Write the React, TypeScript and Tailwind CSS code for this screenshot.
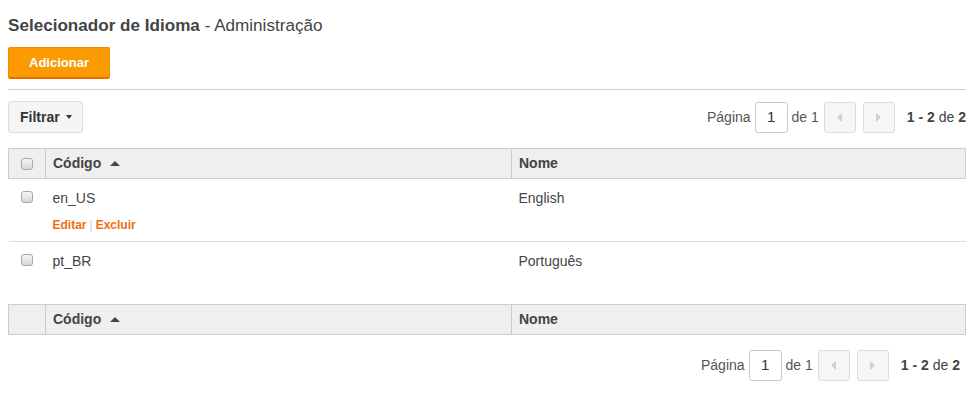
import React from 'react'

const font = { fontFamily: '"Liberation Sans", Arial, sans-serif' }

function Checkbox() {
  return (
    <span className="block mx-auto w-[12px] h-[12px] rounded-[3px] border border-[#a9a9a9] bg-gradient-to-b from-[#f4f4f4] to-[#d8d8d8]" />
  )
}

function SortCaret() {
  return (
    <svg width="10" height="6" viewBox="0 0 10 6" className="inline-block ml-[9px] mb-[2px]">
      <path d="M0 6 L5 1 L10 6 Z" fill="#444" />
    </svg>
  )
}

function Pager({ className = '' }: { className?: string }) {
  return (
    <div className={`flex items-center text-[14px] text-[#555] ${className}`}>
      <span>Página</span>
      <div className="ml-[4px] w-[33px] h-[31px] border border-[#c8c8c8] rounded-[3px] flex items-center justify-center text-[#333] text-[15px]">
        1
      </div>
      <span className="ml-[4px]">de 1</span>
      <button className="ml-[5px] w-[32px] h-[31px] border border-[#ddd] rounded-[3px] bg-[#f6f6f6] flex items-center justify-center">
        <svg width="5" height="9" viewBox="0 0 5 9">
          <path d="M5 0 L0 4.5 L5 9 Z" fill="#cfcfcf" />
        </svg>
      </button>
      <button className="ml-[7px] w-[32px] h-[31px] border border-[#ddd] rounded-[3px] bg-[#f6f6f6] flex items-center justify-center">
        <svg width="5" height="9" viewBox="0 0 5 9">
          <path d="M0 0 L5 4.5 L0 9 Z" fill="#cfcfcf" />
        </svg>
      </button>
      <span className="ml-[12px] text-[#444]">
        <b>1 - 2</b> de <b>2</b>
      </span>
    </div>
  )
}

function HeadRow({ check }: { check: boolean }) {
  return (
    <tr className="bg-[#efefef] h-[30px]">
      <th className="w-[37px] border border-[#ccc] text-center font-normal">
        {check && <Checkbox />}
      </th>
      <th className="w-[466px] border border-[#ccc] text-left pl-[7px] text-[14px] font-bold text-[#444]">
        Código
        <SortCaret />
      </th>
      <th className="border border-[#ccc] text-left pl-[7px] text-[14px] font-bold text-[#444]">Nome</th>
    </tr>
  )
}

export default function App() {
  const rows = [
    { code: 'en_US', name: 'English', actions: true },
    { code: 'pt_BR', name: 'Português', actions: false },
  ]

  return (
    <div style={font} className="w-[975px] h-[402px] bg-white px-[8px] pt-[14px] text-[#444]">
      <h1 className="text-[17.1px] leading-[24px] text-[#444]">
        <span className="font-bold">Selecionador de Idioma</span> - Administração
      </h1>

      <button className="mt-[9px] w-[102px] h-[32px] bg-[#fc9a02] border border-[#f08a00] border-b-[2px] border-b-[#ea6e00] rounded-[2px] text-white font-bold text-[13px]">
        Adicionar
      </button>

      <div className="mt-[10px] border-t border-[#ccc] w-[958px]" />

      <div className="mt-[11px] flex items-center justify-between w-[958px]">
        <button className="h-[32px] pl-[11px] pr-[10px] bg-[#f5f5f5] border border-[#ddd] rounded-[3px] text-[14px] font-bold text-[#333] flex items-center">
          Filtrar
          <svg width="6" height="4" viewBox="0 0 6 4" className="ml-[6px]">
            <path d="M0 0 L6 0 L3 4 Z" fill="#333" />
          </svg>
        </button>
        <Pager />
      </div>

      <table className="mt-[15px] w-[958px] border-collapse">
        <thead>
          <HeadRow check />
        </thead>
        <tbody>
          {rows.map((r, i) => (
            <tr key={r.code} className={i === 0 ? 'border-b border-[#ddd]' : ''}>
              <td className="align-top pt-[12px]">
                <Checkbox />
              </td>
              <td className={`align-top pl-[7px] text-[14px] text-[#444] pt-[10px] ${r.actions ? 'pb-[9px]' : 'pb-[14px]'}`}>
                <div className="leading-[18px]">{r.code}</div>
                {r.actions && (
                  <div className="mt-[11px] text-[12px] font-bold leading-[14px]">
                    <span className="text-[#f26c11]">Editar</span>
                    <span className="text-[#ccc] mx-[3px] font-normal">|</span>
                    <span className="text-[#f26c11]">Excluir</span>
                  </div>
                )}
              </td>
              <td className="align-top pl-[7px] pt-[10px] text-[14px] text-[#444]">
                <div className="leading-[18px]">{r.name}</div>
              </td>
            </tr>
          ))}
        </tbody>
      </table>

      <table className="mt-[20px] w-[958px] border-collapse">
        <thead>
          <HeadRow check={false} />
        </thead>
      </table>

      <div className="mt-[15px] flex justify-end w-[952px]">
        <Pager />
      </div>
    </div>
  )
}
